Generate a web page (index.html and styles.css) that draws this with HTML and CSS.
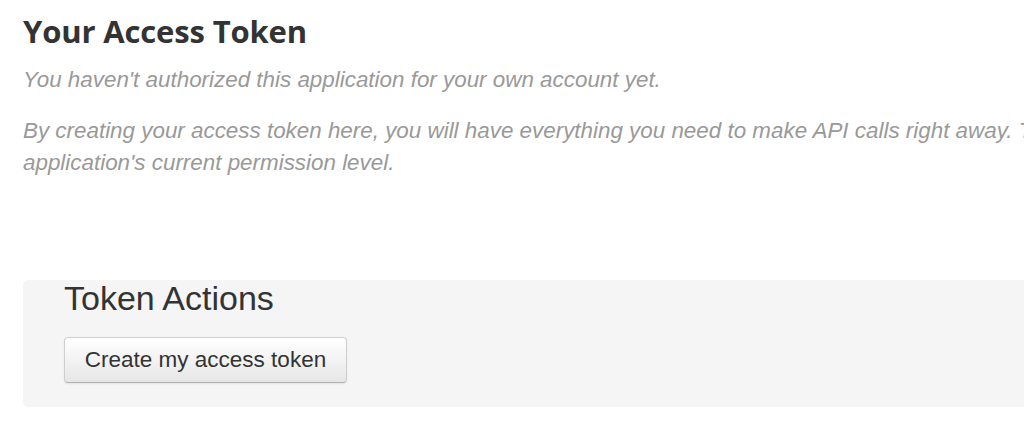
FILE: index.html
```html
<!DOCTYPE html>
<html>
<head>
<meta charset="utf-8">
<link rel="stylesheet" href="styles.css">
</head>
<body>
<div class="page">
  <h1 class="title">Your Access Token</h1>
  <p class="note">You haven't authorized this application for your own account yet.</p>
  <p class="note">By creating your access token here, you will have everything you need to make API calls right away. The access token generated will be assigned your application's current permission level.</p>
  <div class="well">
    <h2 class="well-title">Token Actions</h2>
    <button class="btn">Create my access token</button>
  </div>
</div>
</body>
</html>
```
FILE: styles.css
```css
html, body {
  margin: 0;
  padding: 0;
  background: #fff;
  overflow: hidden;
}
.page {
  width: 1580px;
  padding: 13px 0 0 23px;
  font-family: "Liberation Sans", Arial, sans-serif;
}
.title {
  margin: 0;
  font-family: "Open Sans", "Liberation Sans", sans-serif;
  font-weight: 700;
  font-size: 31px;
  line-height: 36px;
  color: #333;
  letter-spacing: -0.15px;
}
.note {
  margin: 15px 0 0;
  font-style: italic;
  font-size: 22.4px;
  line-height: 32px;
  color: #999;
}
.note + .note {
  margin-top: 19px;
}
.well {
  margin-top: 101px;
  padding: 1px 0 24px 41px;
  background: #f5f5f5;
  border-radius: 5px;
}
.well-title {
  margin: 0;
  font-weight: 400;
  font-size: 34px;
  line-height: 34px;
  color: #333;
}
.btn {
  display: block;
  margin-top: 22px;
  width: 283px;
  height: 46px;
  padding: 0;
  font-family: "Liberation Sans", Arial, sans-serif;
  font-size: 22.5px;
  color: #333;
  background: linear-gradient(#ffffff, #e6e6e6);
  border: 1px solid #cfcfcf;
  border-bottom-color: #b3b3b3;
  border-radius: 4px;
  box-shadow: inset 0 1px 0 rgba(255,255,255,0.2), 0 1px 2px rgba(0,0,0,0.08);
}
```
